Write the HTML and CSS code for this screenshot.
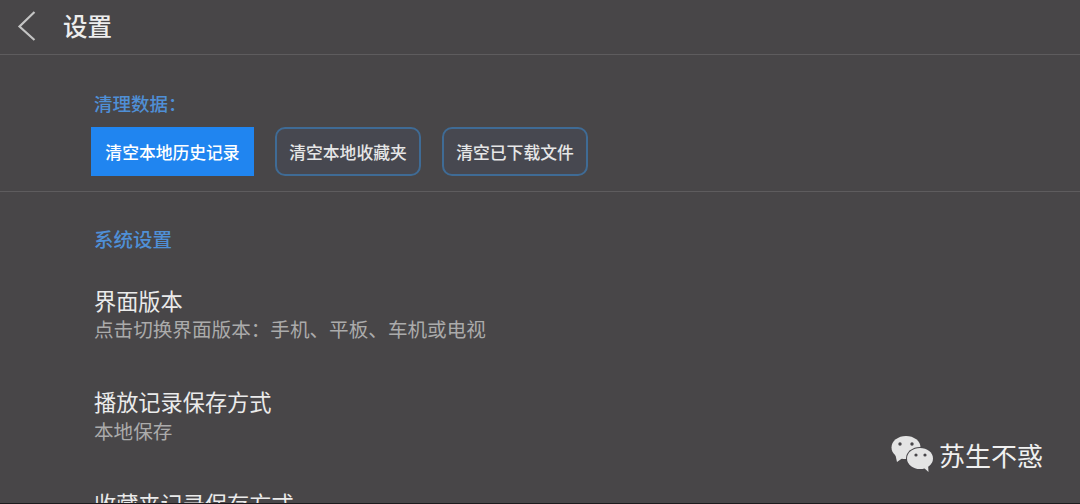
FILE: index.html
```html
<!DOCTYPE html>
<html lang="zh-CN">
<head>
  <meta charset="UTF-8">
  <title>设置</title>
  <link rel="stylesheet" href="styles.css">
</head>
<body>
  <div class="page">
    <div class="top-bar">
      <svg class="back-icon" width="20" height="32" viewBox="0 0 20 32">
        <path d="M17.5 2 L2.5 16.5 L17.5 30" fill="none" stroke="#c4c4c4" stroke-width="2.2"/>
      </svg>
      <h1 class="top-title">设置</h1>
    </div>

    <div class="clear-section">
      <div class="section-label">清理数据：</div>
      <div class="btn-row">
        <button class="btn btn-active">清空本地历史记录</button>
        <button class="btn">清空本地收藏夹</button>
        <button class="btn">清空已下载文件</button>
      </div>
    </div>

    <div class="system-section">
      <div class="section-label">系统设置</div>
      <div class="setting">
        <div class="setting-title">界面版本</div>
        <div class="setting-desc">点击切换界面版本：手机、平板、车机或电视</div>
      </div>
      <div class="setting">
        <div class="setting-title">播放记录保存方式</div>
        <div class="setting-desc">本地保存</div>
      </div>
      <div class="setting">
        <div class="setting-title">收藏夹记录保存方式</div>
      </div>
    </div>

    <!-- watermark sits over the page -->
    <div class="watermark">
      <svg width="42" height="37" viewBox="0 0 42 37">
        <ellipse cx="15" cy="11.5" rx="14.5" ry="11.5" fill="#e4e4e4"/>
        <path d="M4 17 L6 26 L13 21 Z" fill="#e4e4e4"/>
        <ellipse cx="29" cy="22.5" rx="14" ry="11.5" fill="#48464a"/>
        <ellipse cx="29" cy="22.5" rx="13" ry="10.5" fill="#e4e4e4"/>
        <path d="M32 31 L37.5 36 L37 28 Z" fill="#e4e4e4"/>
        <circle cx="9" cy="8" r="1.7" fill="#48464a"/>
        <circle cx="21" cy="8" r="1.7" fill="#48464a"/>
        <circle cx="25" cy="19" r="1.6" fill="#48464a"/>
        <circle cx="34" cy="19" r="1.6" fill="#48464a"/>
      </svg>
      <span class="watermark-text">苏生不惑</span>
    </div>
  </div>
</body>
</html>
```

FILE: styles.css
```css
/* Basic styling */
html, body {
  margin: 0;
  padding: 0;
  height: 100%;
}

body {
  background-color: #484648;
  font-family: "Noto Sans CJK SC", "Liberation Sans", sans-serif;
  overflow: hidden;
}

.page {
  position: relative;
  height: 504px;
  overflow: hidden;
  border-bottom: 1px solid #1c1b1d;
  box-sizing: border-box;
}

/* Top bar */
.top-bar {
  display: flex;
  align-items: center;
  height: 54px;
  padding-left: 17px;
  border-bottom: 1px solid #5e5c5e;
}

.back-icon {
  display: block;
  margin-top: -3px;
}

.top-title {
  margin: -2px 0 0 26px;
  font-size: 24.5px;
  font-weight: 500;
  line-height: 54px;
  color: #ededed;
}

/* Clear data */
.clear-section {
  height: 136px;
  padding-left: 91px;
  border-bottom: 1px solid #5e5c5e;
}

.section-label {
  margin-left: 3px;
  font-size: 18.5px;
  font-weight: 500;
  line-height: 26px;
  color: #4f8fd6;
}

.clear-section .section-label {
  margin-left: 3px;
  padding-top: 35px;
}

.btn-row {
  display: flex;
  gap: 21px;
  margin-top: 11px;
}

.btn {
  height: 49px;
  width: 146px;
  padding: 0;
  font-family: inherit;
  font-size: 16.8px;
  font-weight: 500;
  color: #e6e6e6;
  background: #474850;
  border: 2px solid #3f6b95;
  border-radius: 10px;
}

.btn-active {
  width: 163px;
  color: #fff;
  background: #2085f0;
  border: none;
  border-radius: 0;
}

/* System settings */
.system-section {
  padding: 34px 0 0 91px;
}

.system-section .section-label {
  font-size: 19.5px;
}

.setting {
  margin: 0 0 0 3px;
  height: 102px;
}

.setting-title {
  font-size: 22.2px;
  line-height: 32px;
  color: #ebebeb;
}

.setting-desc {
  font-size: 19.6px;
  line-height: 28px;
  color: #ababab;
}

.section-label + .setting {
  margin-top: 32px;
}

.section-label + .setting .setting-desc {
  margin-top: -1px;
}

.section-label + .setting {
  height: 101px;
}

/* Watermark */
.watermark {
  position: absolute;
  left: 891px;
  top: 436px;
  display: flex;
  align-items: center;
  gap: 6px;
}

.watermark-text {
  font-size: 26px;
  line-height: 36px;
  color: #f0f0f0;
}
```
